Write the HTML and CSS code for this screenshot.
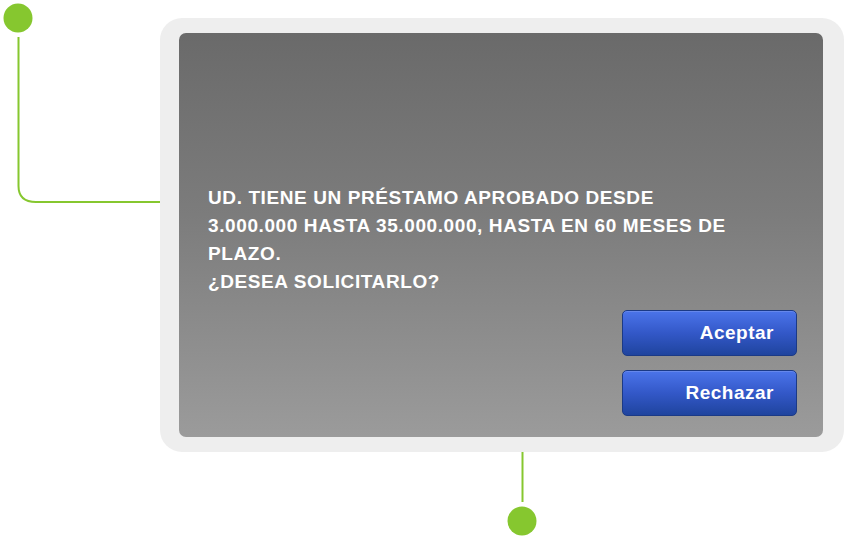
FILE: index.html
```html
<!DOCTYPE html>
<html lang="es">
<head>
    <meta charset="UTF-8">
    <meta name="viewport" content="width=device-width, initial-scale=1.0">
    <title>Oferta de préstamo</title>
    <link rel="stylesheet" href="styles.css">
</head>
<body>
    <div class="stage">
        <!-- callout connectors -->
        <svg class="connectors" width="844" height="540" viewBox="0 0 844 540">
            <circle cx="18" cy="18" r="14.5" fill="#86c72f"/>
            <path d="M18.5 37 V186 Q18.5 202 36 202 H160" fill="none" stroke="#86c72f" stroke-width="2"/>
            <path d="M522.5 452 V502" fill="none" stroke="#86c72f" stroke-width="2"/>
            <circle cx="522" cy="521" r="14.5" fill="#86c72f"/>
        </svg>

        <div class="device">
            <div class="screen">
                <p class="message">
                    UD. TIENE UN PRÉSTAMO APROBADO DESDE<br>
                    3.000.000 HASTA 35.000.000, HASTA EN 60 MESES DE<br>
                    PLAZO.<br>
                    ¿DESEA SOLICITARLO?
                </p>
                <div class="actions">
                    <button class="action-button">Aceptar</button>
                    <button class="action-button">Rechazar</button>
                </div>
            </div>
        </div>
    </div>
</body>
</html>
```

FILE: styles.css
```css
* {
    margin: 0;
    padding: 0;
    box-sizing: border-box;
}

body {
    font-family: 'Liberation Sans', Arial, sans-serif;
    background: #FFFFFF;
    width: 844px;
    height: 540px;
    overflow: hidden;
}

.stage {
    position: relative;
    width: 844px;
    height: 540px;
    padding-top: 18px;
    padding-left: 160px;
}

.connectors {
    position: absolute;
    top: 0;
    left: 0;
}

.device {
    width: 684px;
    height: 434px;
    background: #EEEEEE;
    border-radius: 22px;
    padding: 15px 21px 15px 19px;
}

.screen {
    height: 100%;
    border-radius: 7px;
    background: linear-gradient(180deg, #6A6A6A 0%, #7C7C7C 45%, #9B9B9B 100%);
    display: flex;
    flex-direction: column;
    justify-content: flex-end;
    padding: 0 26px 21px 29px;
}

.message {
    color: #FFFFFF;
    font-weight: 700;
    font-size: 19px;
    letter-spacing: 0.6px;
    line-height: 28px;
    margin-bottom: 14px;
}

.actions {
    display: flex;
    flex-direction: column;
    align-items: flex-end;
    gap: 14px;
}

.action-button {
    width: 175px;
    height: 46px;
    border: 1px solid #1B3A86;
    border-radius: 5px;
    background: linear-gradient(180deg, #4B74EA 0%, #3358C8 50%, #1F449E 100%);
    color: #FFFFFF;
    font-family: inherit;
    font-size: 19px;
    font-weight: 700;
    letter-spacing: 0.5px;
    text-align: right;
    padding-right: 22px;
    box-shadow: inset 0 1px 0 rgba(255, 255, 255, 0.15);
    cursor: pointer;
}
```
